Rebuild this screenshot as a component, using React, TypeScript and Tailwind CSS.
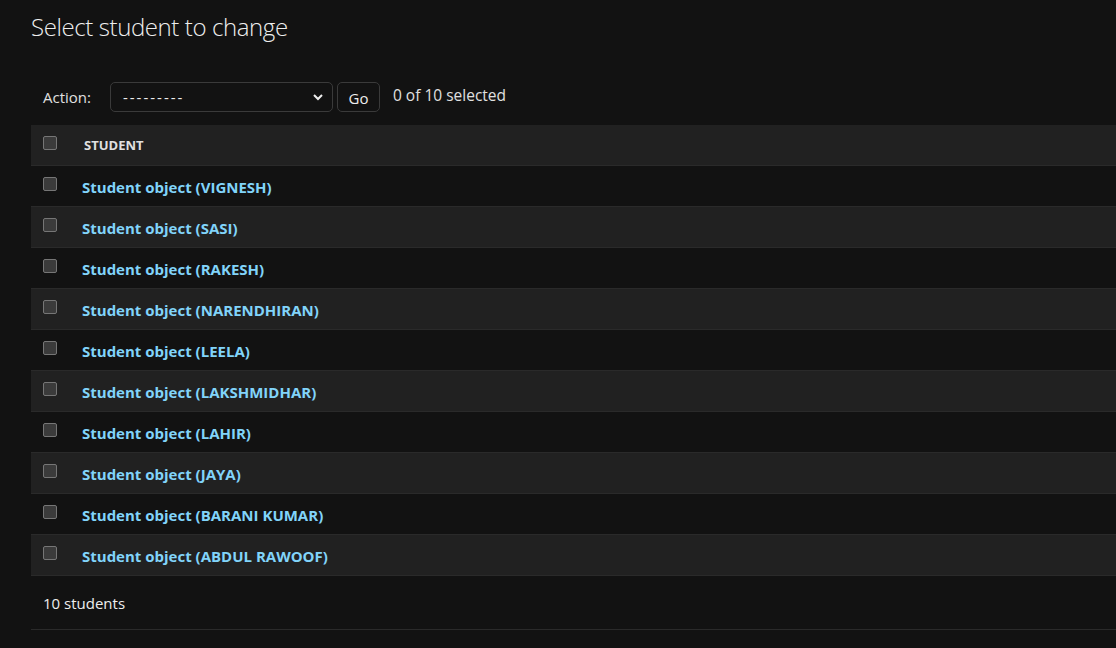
import React from "react";

const names = [
  "VIGNESH",
  "SASI",
  "RAKESH",
  "NARENDHIRAN",
  "LEELA",
  "LAKSHMIDHAR",
  "LAHIR",
  "JAYA",
  "BARANI KUMAR",
  "ABDUL RAWOOF",
];

function Box() {
  return (
    <span className="block w-[14px] h-[14px] rounded-[2px] border border-[#767676] bg-[#3b3b3b]" />
  );
}

export default function App() {
  return (
    <div
      className="min-h-[648px] w-full bg-[#121212] text-[#eeeeee] overflow-hidden"
      style={{ fontFamily: '"Open Sans", "Noto Sans", sans-serif' }}
    >
      <div className="pl-[31px]">
        <h1 className="pt-[8px] h-[82px] text-[24px] tracking-[-0.4px] font-light leading-[38px] text-[#eeeeee]">
          Select student to change
        </h1>
        <div className="flex items-center h-[30px] pl-[12px]">
          <span className="text-[15px] text-[#e0e0e0]">Action:</span>
          <div className="ml-[19px] w-[223px] h-[30px] rounded-[5px] border border-[#3a3a3a] flex items-center justify-between pl-[12px] pr-[7px]">
            <span className="text-[15px] tracking-[2px] text-[#eeeeee]">---------</span>
            <svg width="14" height="14" viewBox="0 0 14 14">
              <path d="M3 5 L7 9 L11 5" stroke="#eeeeee" strokeWidth="2" fill="none" />
            </svg>
          </div>
          <div className="ml-[4px] w-[43px] h-[30px] rounded-[5px] border border-[#3a3a3a] flex items-center justify-center pt-[2px]">
            <span className="text-[15px] text-[#eeeeee]">Go</span>
          </div>
          <span className="ml-[13px] text-[15.5px] text-[#e0e0e0] -mt-[3px]">0 of 10 selected</span>
        </div>
        <div className="mt-[13px]">
          <div className="h-[41px] bg-[#212121] border-b border-[#2a2a2a] flex items-center">
            <div className="pl-[12px] w-[53px] -mt-[4px]">
              <Box />
            </div>
            <span className="text-[13px] font-bold text-[#e0e0e0] mt-[2px]">STUDENT</span>
          </div>
          {names.map((n, i) => (
            <div
              key={n}
              className={
                "h-[41px] border-b border-[#2a2a2a] flex items-center " +
                (i % 2 === 1 ? "bg-[#212121]" : "bg-[#121212]")
              }
            >
              <div className="pl-[12px] w-[51px] -mt-[4px]">
                <Box />
              </div>
              <a className="text-[15px] font-bold text-[#81d4fa] mt-[2px]">
                Student object ({n})
              </a>
            </div>
          ))}
          <div className="h-[54px] border-b border-[#2a2a2a] flex items-center pl-[12px]">
            <span className="text-[15px] text-[#eeeeee] mt-[1px]">10 students</span>
          </div>
        </div>
      </div>
    </div>
  );
}
